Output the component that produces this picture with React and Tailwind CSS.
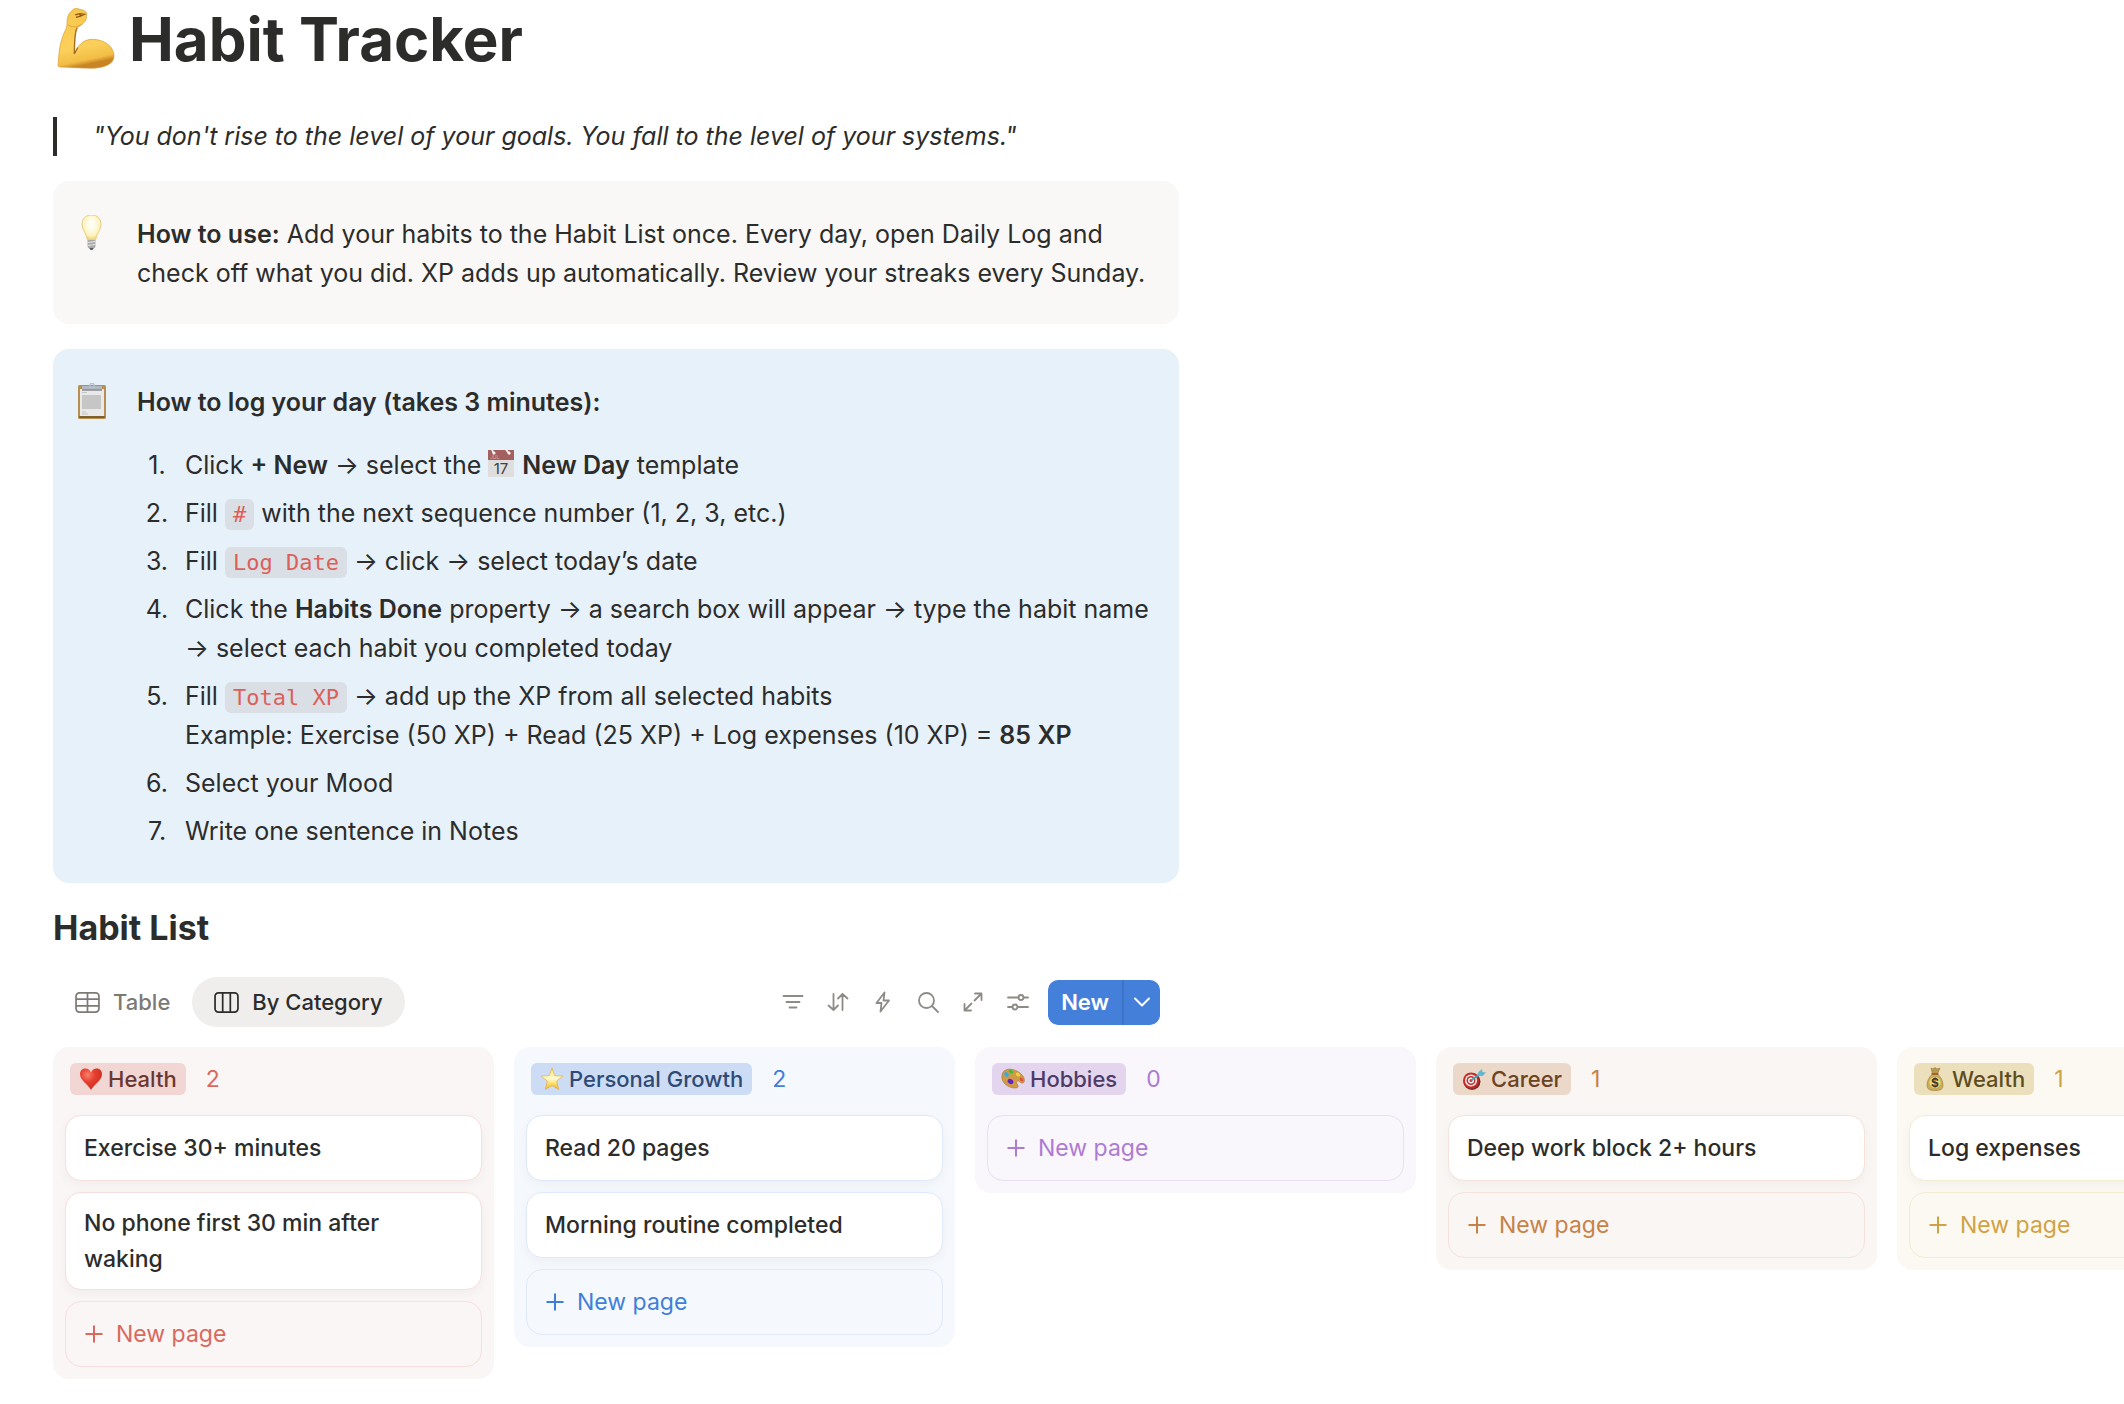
import React, { useState } from "react";

const columns = [
  {
    name: "Health",
    icon: HeartIcon,
    cards: ["Exercise 30+ minutes", "No phone first 30 min after waking"],
    bg: "bg-[#faf6f5]",
    tag: "bg-[#f1d6d3] text-[#6c3630]",
    accent: "text-[#d9695c]",
    border: "border-[#f6dfdc]",
  },
  {
    name: "Personal Growth",
    icon: StarIcon,
    cards: ["Read 20 pages", "Morning routine completed"],
    bg: "bg-[#f5f9fe]",
    tag: "bg-[#ccdcf4] text-[#2f4a75]",
    accent: "text-[#3f7fd9]",
    border: "border-[#dfe9f9]",
  },
  {
    name: "Hobbies",
    icon: PaletteIcon,
    cards: [],
    bg: "bg-[#f9f6fc]",
    tag: "bg-[#e2d5ed] text-[#4f3a66]",
    accent: "text-[#ad7bd1]",
    border: "border-[#e9dff4]",
  },
  {
    name: "Career",
    icon: TargetIcon,
    cards: ["Deep work block 2+ hours"],
    bg: "bg-[#faf6f3]",
    tag: "bg-[#ebd8c9] text-[#6b431f]",
    accent: "text-[#c78248]",
    border: "border-[#f5e3d9]",
  },
  {
    name: "Wealth",
    icon: MoneyBagIcon,
    cards: ["Log expenses"],
    bg: "bg-[#fcf9f2]",
    tag: "bg-[#ecdfbc] text-[#5e4e1f]",
    accent: "text-[#cfa245]",
    border: "border-[#f3ebd2]",
  },
];

function MuscleIcon() {
  return (
    <svg viewBox="22 18 178 196" className="h-16 w-[58px] shrink-0" aria-hidden="true">
      <defs>
        <linearGradient id="skin" x1="0" y1="0" x2="0.2" y2="1">
          <stop offset="0" stopColor="#f6c64c" />
          <stop offset="0.7" stopColor="#fbd05a" />
          <stop offset="0.92" stopColor="#f2bd45" />
          <stop offset="1" stopColor="#c98524" />
        </linearGradient>
      </defs>
      <path
        d="M54 50C58 38 68 26 78 22C90 24 102 26 110 32C116 38 112 46 112 54C108 66 98 72 84 82C78 90 77 110 76 130L75 162C84 140 100 117 130 117C168 117 197 140 197 168C197 192 170 204 130 206C95 206 60 202 30 202C25 201 24 196 26 188C28 150 32 120 50 84C54 74 52 62 54 50Z"
        fill="url(#skin)"
        stroke="#d39a33"
        strokeWidth="2"
      />
      <path d="M84 82C78 90 77 110 76 130L75 162L86 142" fill="none" stroke="#a8691c" strokeWidth="4" />
      <path d="M78 42L92 38L106 40L94 46L80 50M92 38L94 46" fill="none" stroke="#8f5514" strokeWidth="4" />
      <path d="M56 72C66 80 82 82 100 70" fill="none" stroke="#e0a43a" strokeWidth="3" />
    </svg>
  );
}

function BulbIcon() {
  return (
    <svg viewBox="0 0 36 36" className="size-9" aria-hidden="true">
      <defs>
        <radialGradient id="glow" cx="0.5" cy="0.38" r="0.6">
          <stop offset="0.2" stopColor="#fffef4" />
          <stop offset="0.75" stopColor="#fdf3bd" />
          <stop offset="1" stopColor="#efd37b" />
        </radialGradient>
      </defs>
      <path
        d="M18.500 0C12.500 0 9 4 9 9.500C9 15 13.500 18 14.500 25H22.500C23.500 18 28 15 28 9.500C28 4 24.500 0 18.500 0Z"
        fill="url(#glow)"
        stroke="#e8cd7d"
        strokeWidth="1"
      />
      <path d="M14.500 25H22.500V31C22.500 33 20.500 34 18.500 34C16.500 34 14.500 33 14.500 31Z" fill="#a9a9a9" />
      <path d="M14.500 27.500L22.500 26.500M14.500 30.500L22.500 29.500" stroke="#e8e8e8" strokeWidth="1" />
      <path d="M16.500 33H20.500L19.500 35H17.500Z" fill="#55565a" />
    </svg>
  );
}

function ClipboardIcon() {
  return (
    <svg viewBox="0 1 36 38" className="h-[38px] w-9" aria-hidden="true">
      <rect x="5" y="3" width="28" height="34" rx="1.500" fill="#b98f51" />
      <rect x="7" y="7" width="24" height="27" fill="#e9e9e9" />
      <path d="M6 34H32L31.500 36H6.500Z" fill="#7f5f2c" />
      <rect x="9" y="13" width="19" height="14" fill="#c6c6c6" />
      <path d="M9 10.500H14M9 30H13M9 32H15" stroke="#c4c4c4" strokeWidth="1" />
      <path d="M9 4H29V7.500H9Z" fill="#b3b8c0" />
      <path d="M9 8H29" stroke="#6f7379" strokeWidth="1.200" />
      <circle cx="19" cy="3.500" r="2.200" fill="none" stroke="#b7c2cd" strokeWidth="1.400" />
    </svg>
  );
}

function CalendarIcon() {
  return (
    <svg viewBox="0 0 26 27" className="mr-2 inline-block h-[27px] w-[26px] align-[-3px]" aria-hidden="true">
      <rect width="26" height="27" fill="#dedede" />
      <rect width="26" height="10" fill="#a45f5f" />
      <path d="M4 0L6 4M18 0L22 4" stroke="#fff" strokeWidth="1.600" />
      <circle cx="6" cy="3" r="1.500" fill="#fff" />
      <circle cx="21" cy="3" r="1.500" fill="#fff" />
      <text x="2" y="9" fontSize="5" fill="#d9a9a9" fontFamily="Inter, sans-serif">JUL</text>
      <text x="13" y="24" fontSize="15" textAnchor="middle" fill="#3f3f3f" fontFamily="Inter, sans-serif">17</text>
    </svg>
  );
}

function HeartIcon() {
  return (
    <svg viewBox="0 0 24 24" className="size-6" aria-hidden="true">
      <defs>
        <radialGradient id="heart" cx="0.35" cy="0.3" r="0.8">
          <stop offset="0" stopColor="#f98270" />
          <stop offset="0.4" stopColor="#e8402f" />
          <stop offset="1" stopColor="#bf2a1c" />
        </radialGradient>
      </defs>
      <path
        d="M12 23C10 18 1 14 1 7C1 3.500 3.500 1.500 6.500 1.500C9 1.500 11 3 12 5.500C13 3 15 1.500 17.500 1.500C20.500 1.500 23 3.500 23 7C23 14 14 18 12 23Z"
        fill="url(#heart)"
      />
    </svg>
  );
}

function StarIcon() {
  return (
    <svg viewBox="0 0 24 24" className="size-6" aria-hidden="true">
      <defs>
        <linearGradient id="star" x1="0" y1="0" x2="0" y2="1">
          <stop offset="0" stopColor="#fbe27a" />
          <stop offset="0.5" stopColor="#fffad0" />
          <stop offset="0.75" stopColor="#fbdc5c" />
          <stop offset="1" stopColor="#ecaa33" />
        </linearGradient>
      </defs>
      <path
        d="M12 1L14.800 8.600L23 9L16.600 14.100L18.800 22.500L12 18.500L5.200 22.500L7.400 14.100L1 9L9.200 8.600Z"
        fill="url(#star)"
        stroke="#e4b54e"
        strokeWidth="0.8"
        strokeLinejoin="round"
      />
    </svg>
  );
}

function PaletteIcon() {
  return (
    <svg viewBox="0 0 24 24" className="size-6" aria-hidden="true">
      <path
        d="M3 4C8 0 17 3 21 8C24 11 24 15 22 16C20 17 18 13 16 14C14 16 18 18 17 20C15 22 8 21 4 17C0 13 0 7 3 4Z"
        fill="#d19a46"
        stroke="#a87327"
        strokeWidth="0.6"
      />
      <ellipse cx="5.500" cy="7.500" rx="2.600" ry="2" fill="#36a9de" transform="rotate(40 5.500 7.500)" />
      <ellipse cx="10" cy="4.500" rx="2.500" ry="1.800" fill="#49b83c" transform="rotate(30 10 4.500)" />
      <ellipse cx="17" cy="7.500" rx="2.400" ry="1.600" fill="#f0d13c" transform="rotate(40 17 7.500)" />
      <ellipse cx="20.500" cy="12.500" rx="2.200" ry="1.500" fill="#e2523a" transform="rotate(50 20.500 12.500)" />
      <ellipse cx="9.500" cy="14.500" rx="3" ry="2.400" fill="#6226b8" transform="rotate(30 9.500 14.500)" />
    </svg>
  );
}

function TargetIcon() {
  return (
    <svg viewBox="0 0 24 24" className="size-6" aria-hidden="true">
      <ellipse cx="10" cy="14.500" rx="8.500" ry="8.500" fill="#7d2a28" />
      <circle cx="9" cy="13.500" r="8" fill="#c42d2a" />
      <circle cx="9" cy="13.500" r="6" fill="#f4eeee" />
      <circle cx="9" cy="13.500" r="4.500" fill="#c42d2a" />
      <circle cx="9" cy="13.500" r="3" fill="#f4eeee" />
      <circle cx="9" cy="13.500" r="1.500" fill="#c42d2a" />
      <path d="M9 13.500L18 7" stroke="#4d9fb3" strokeWidth="1.800" />
      <path d="M15 8.500L16.500 5L20 2L20.500 5L24 5.500L20.500 9Z" fill="#5fb9cd" />
    </svg>
  );
}

function MoneyBagIcon() {
  return (
    <svg viewBox="0 0 24 24" className="size-6" aria-hidden="true">
      <path d="M8 1L10 2L12 0.500L14 2L17 1L14.500 7H9.500Z" fill="#b9984f" stroke="#8a6d31" strokeWidth="0.5" />
      <path
        d="M9.500 7H14.500C18 10 20 14 20 18C20 22 18 23.500 12 23.500C6 23.500 4 22 4 18C4 14 6 10 9.500 7Z"
        fill="#c9ad57"
        stroke="#947c3a"
        strokeWidth="0.6"
      />
      <path d="M8.500 7H15.500" stroke="#a5532a" strokeWidth="1.500" />
      <circle cx="12" cy="15.500" r="5.600" fill="#ecd873" />
      <text x="12" y="20" fontSize="12" fontWeight="700" textAnchor="middle" fill="#3a3a34" fontFamily="Inter, sans-serif">$</text>
    </svg>
  );
}

function TableIcon() {
  return (
    <svg viewBox="0 0 26 22" className="h-[21px] w-[25px]" fill="none" stroke="currentColor" strokeWidth="1.800" aria-hidden="true">
      <rect x="1" y="1" width="24" height="20" rx="3.500" />
      <path d="M1 7.500H25M1 14.500H25M13 1V21" />
    </svg>
  );
}

function BoardIcon() {
  return (
    <svg viewBox="0 0 26 22" className="h-[21px] w-[25px]" fill="none" stroke="currentColor" strokeWidth="1.800" aria-hidden="true">
      <rect x="1" y="1" width="24" height="20" rx="3.500" />
      <path d="M9 1V21M17 1V21" />
    </svg>
  );
}

const tools = [
  { label: "Filter", paths: <path d="M1.500 5H20.500M4.500 11H17.500M7.500 16.500H14.500" /> },
  { label: "Sort", paths: <path d="M6.500 3V19M1.500 14.500L6.500 19L11 14.500M15.500 19V3M11 7.500L15.500 3L20.500 7.500" /> },
  { label: "Automations", paths: <path d="M12.500 1.500L4.500 12H9.500L8.500 20.500L17 9.500H11.500Z" /> },
  { label: "Search", paths: <><circle cx="9.500" cy="9.500" r="7.500" /><path d="M15 15L21 21" /></> },
  { label: "Open full page", paths: <path d="M12.500 9.500L19.500 2.500M13 2.500H19.500V9M9.500 12.500L2.500 19.500M2.500 13V19.500H9" /> },
  { label: "Settings", paths: <><path d="M1 6.500H11.500M16.500 6.500H21M1 16H5.500M10.500 16H21" /><circle cx="14" cy="6.500" r="2.500" /><circle cx="8" cy="16" r="2.500" /></> },
];

function Code({ children }) {
  return (
    <code className="rounded-md bg-[#d9dfe5] px-2 py-[3px] font-['DejaVu_Sans_Mono','Liberation_Mono',monospace] text-[22px] leading-none text-[#dc5f59]">
      {children}
    </code>
  );
}

function Step({ number, children }) {
  return (
    <li className="flex gap-2 pt-1 pb-[5px]">
      <span className="w-10 shrink-0 text-center">{number}.</span>
      <div>{children}</div>
    </li>
  );
}

function NewPageButton({ column }) {
  return (
    <button
      className={`flex min-h-[66px] w-full items-center gap-3 rounded-2xl border px-[18px] text-left ${column.border} ${column.accent}`}
    >
      <svg viewBox="0 0 20 20" className="size-5" stroke="currentColor" strokeWidth="2" aria-hidden="true">
        <path d="M1.500 10H18.500M10 1.500V18.500" />
      </svg>
      New page
    </button>
  );
}

function Column({ column }) {
  const Icon = column.icon;

  return (
    <section className={`flex w-[441px] shrink-0 flex-col rounded-2xl px-3 pt-4 pb-3 ${column.bg}`}>
      <div className="mb-5 flex h-8 items-center gap-5 pl-[5px]">
        <h3 className={`flex h-8 items-center gap-[5px] rounded-md px-[9px] text-[22px] font-medium ${column.tag}`}>
          <Icon />
          {column.name}
        </h3>
        <span className={column.accent}>{column.cards.length}</span>
      </div>

      <div className="flex flex-col gap-[11px]">
        {column.cards.map((card) => (
          <article
            key={card}
            className={`flex min-h-[66px] items-center rounded-2xl border bg-white px-[18px] py-3 leading-9 font-medium shadow-[0_4px_12px_rgba(0,0,0,0.04)] ${column.border}`}
          >
            {card}
          </article>
        ))}
        <NewPageButton column={column} />
      </div>
    </section>
  );
}

function App() {
  const [view, setView] = useState("board");

  return (
    <main className="overflow-hidden bg-white pl-[53px] font-['Inter','Liberation_Sans',sans-serif] text-[25px] leading-[39px] text-[#2c2c2b]">
      <h1 className="flex items-center gap-[14px] pl-1 text-[60px] leading-[78px] font-bold">
        <MuscleIcon />
        Habit Tracker
      </h1>

      <div className="max-w-[1126px]">
        <blockquote className="mt-[39px] border-l-4 border-[#2c2c2b] pl-9 italic">
          "You don't rise to the level of your goals. You fall to the level of your systems."
        </blockquote>

        <div className="mt-[25px] flex gap-7 rounded-2xl bg-[#f9f8f7] pt-[34px] pr-6 pb-[31px] pl-5">
          <BulbIcon />
          <p className="min-w-0 flex-1">
            <strong className="font-semibold">How to use:</strong> Add your habits to the Habit List once. Every day, open Daily Log and check off what you did. XP adds up automatically. Review your streaks every Sunday.
          </p>
        </div>

        <div className="mt-[25px] flex gap-7 rounded-2xl bg-[#e7f1fa] pt-[34px] pr-6 pb-[27px] pl-5">
          <ClipboardIcon />
          <div className="min-w-0 flex-1">
            <p className="mb-5 font-semibold">How to log your day (takes 3 minutes):</p>
            <ol>
              <Step number={1}>
                Click <strong className="font-semibold">+ New</strong> → select the <CalendarIcon />
                <strong className="font-semibold">New Day</strong> template
              </Step>
              <Step number={2}>
                Fill <Code>#</Code> with the next sequence number (1, 2, 3, etc.)
              </Step>
              <Step number={3}>
                Fill <Code>Log Date</Code> → click → select today’s date
              </Step>
              <Step number={4}>
                Click the <strong className="font-semibold">Habits Done</strong> property → a search box will appear → type the habit name → select each habit you completed today
              </Step>
              <Step number={5}>
                Fill <Code>Total XP</Code> → add up the XP from all selected habits
                <br />
                Example: Exercise (50 XP) + Read (25 XP) + Log expenses (10 XP) = <strong className="font-semibold">85 XP</strong>
              </Step>
              <Step number={6}>Select your Mood</Step>
              <Step number={7}>Write one sentence in Notes</Step>
            </ol>
          </div>
        </div>

        <h2 className="mt-5 text-[34px] leading-[50px] font-bold">Habit List</h2>

        <div className="mt-6 flex h-[50px] items-center justify-between pr-[19px] text-[22px]">
          <div className="flex h-full font-medium">
            <button
              onClick={() => setView("table")}
              className={`flex items-center gap-[13px] rounded-full px-[22px] ${view === "table" ? "bg-[#efeeed]" : "text-[#7d7a75]"}`}
            >
              <TableIcon />
              Table
            </button>
            <button
              onClick={() => setView("board")}
              className={`flex items-center gap-[13px] rounded-full px-[22px] ${view === "board" ? "bg-[#efeeed]" : "text-[#7d7a75]"}`}
            >
              <BoardIcon />
              By Category
            </button>
          </div>

          <div className="flex items-center">
            {tools.map((tool) => (
              <button key={tool.label} aria-label={tool.label} className="flex h-11 w-[45px] items-center justify-center text-[#8e8b86]">
                <svg viewBox="0 0 22 22" className="size-[22px]" fill="none" stroke="currentColor" strokeWidth="1.800" strokeLinecap="round" strokeLinejoin="round" aria-hidden="true">
                  {tool.paths}
                </svg>
              </button>
            ))}
            <div className="ml-2 flex h-[45px] overflow-hidden rounded-[10px] bg-[#447fd9] text-white">
              <button className="border-r-2 border-[#3d74c8] px-[13px] font-semibold">New</button>
              <button aria-label="More options" className="flex w-9 items-center justify-center">
                <svg viewBox="0 0 18 10" className="h-[10px] w-[18px]" fill="none" stroke="currentColor" strokeWidth="2" strokeLinecap="round" strokeLinejoin="round" aria-hidden="true">
                  <path d="M2 1.500L9 8.500L16 1.500" />
                </svg>
              </button>
            </div>
          </div>
        </div>
      </div>

      <div className="mt-5 flex items-start gap-5 overflow-hidden pb-6 text-[23px]">
        {columns.map((column) => (
          <Column key={column.name} column={column} />
        ))}
      </div>
    </main>
  );
}

export default App;
